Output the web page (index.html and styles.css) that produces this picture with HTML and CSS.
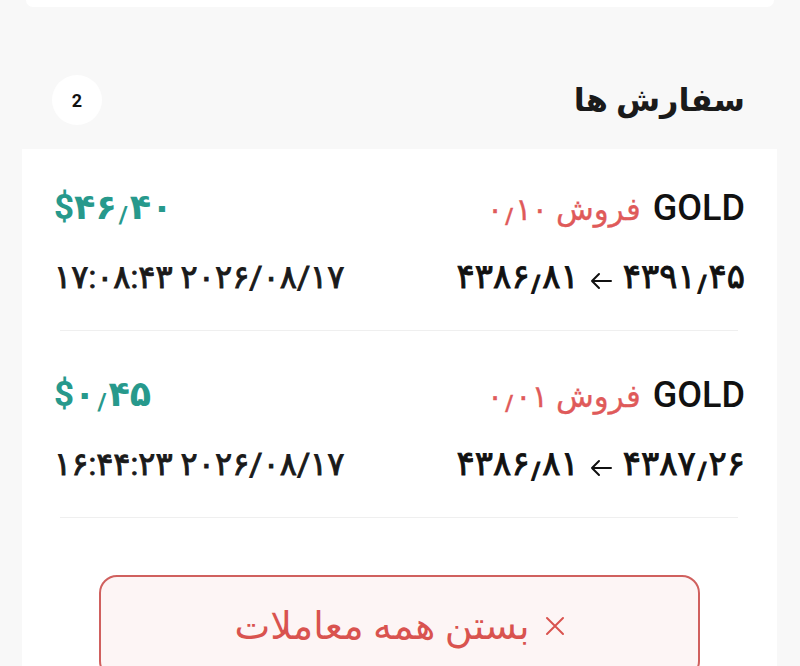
FILE: index.html
```html
<!DOCTYPE html>
<html lang="fa">
<head>
<meta charset="utf-8">
<title>سفارش ها</title>
<link rel="stylesheet" href="styles.css">
</head>
<body>
<div class="top-card"></div>
<header class="head" dir="rtl">
  <h2 class="title">سفارش ها</h2>
  <span class="badge">2</span>
</header>
<section class="list" dir="rtl">
  <div class="order">
    <div class="line line-main">
      <div class="sym"><span class="name">GOLD</span><span class="side">فروش <bdi>۰<span class="dec">/</span>۱۰</bdi></span></div>
      <div class="profit" dir="ltr">$۴۶<span class="dec">/</span>۴۰</div>
    </div>
    <div class="line line-sub">
      <div class="prices"><bdi>۴۳۹۱<span class="dec">/</span>۴۵</bdi><svg class="arrow" viewBox="0 0 24 18" width="24" height="18"><path d="M22 9H3M10 2L3 9l7 7" fill="none" stroke="#111" stroke-width="2" stroke-linecap="round" stroke-linejoin="round"/></svg><bdi>۴۳۸۶<span class="dec">/</span>۸۱</bdi></div>
      <div class="time" dir="ltr">۱۷:۰۸:۴۳ ۲۰۲۶/۰۸/۱۷</div>
    </div>
  </div>
  <div class="order">
    <div class="line line-main">
      <div class="sym"><span class="name">GOLD</span><span class="side">فروش <bdi>۰<span class="dec">/</span>۰۱</bdi></span></div>
      <div class="profit" dir="ltr">$۰<span class="dec">/</span>۴۵</div>
    </div>
    <div class="line line-sub">
      <div class="prices"><bdi>۴۳۸۷<span class="dec">/</span>۲۶</bdi><svg class="arrow" viewBox="0 0 24 18" width="24" height="18"><path d="M22 9H3M10 2L3 9l7 7" fill="none" stroke="#111" stroke-width="2" stroke-linecap="round" stroke-linejoin="round"/></svg><bdi>۴۳۸۶<span class="dec">/</span>۸۱</bdi></div>
      <div class="time" dir="ltr">۱۶:۴۴:۲۳ ۲۰۲۶/۰۸/۱۷</div>
    </div>
  </div>
  <button class="close-all" type="button"><svg class="x" viewBox="0 0 20 20" width="20" height="20"><path d="M2 2L18 18M18 2L2 18" fill="none" stroke="#d9534f" stroke-width="2" stroke-linecap="round"/></svg><span>بستن همه معاملات</span></button>
</section>
</body>
</html>
```

FILE: styles.css
```css
html, body {
  margin: 0;
  padding: 0;
}
body {
  background: #f8f8f8;
  font-family: Roboto, "DejaVu Sans", sans-serif;
  color: #111;
  height: 666px;
  overflow: hidden;
}
.top-card {
  height: 7px;
  margin: 0 26px;
  background: #fff;
  border-radius: 0 0 18px 18px;
}
.head {
  display: flex;
  align-items: center;
  justify-content: space-between;
  box-sizing: border-box;
  height: 142px;
  padding: 44px 55px 0 52px;
}
.title {
  margin: 0;
  font-size: 32px;
  font-weight: 700;
  line-height: 1;
  color: #1a1a1a;
}
.badge {
  width: 50px;
  height: 50px;
  border-radius: 50%;
  background: #fff;
  display: flex;
  align-items: center;
  justify-content: center;
  font-weight: 700;
  font-size: 18px;
  color: #111;
}
.list {
  background: #fff;
  margin: 0 23px 0 22px;
  padding: 0 32px;
  height: 560px;
}
.order {
  padding-top: 40px;
}
.order:first-child {
  padding-top: 35px;
}
.order::after {
  content: "";
  display: block;
  height: 1px;
  margin: 31px 7px 0 6px;
  background: #efefef;
}
.line {
  display: flex;
  align-items: center;
  justify-content: space-between;
}
.line-main {
  height: 48px;
}
.line-sub {
  height: 44px;
  margin-top: 23px;
}
.sym {
  display: flex;
  align-items: baseline;
  gap: 12px;
}
.name {
  font-size: 36px;
  font-weight: 500;
  color: #111;
}
.side {
  font-size: 31px;
  color: #df5a5a;
  -webkit-text-stroke: 0.3px #df5a5a;
}
.dec {
  display: inline-block;
  font-size: 0.7em;
  vertical-align: -0.2em;
  margin: 0 0.08em;
  font-weight: 700;
}
.profit {
  font-size: 35px;
  font-weight: 700;
  color: #27998c;
}
.prices {
  display: flex;
  align-items: center;
  gap: 10px;
  font-size: 34px;
  font-weight: 400;
  -webkit-text-stroke: 0.9px #111;
}
.arrow {
  margin-top: 8px;
}
.time {
  font-size: 32px;
  font-weight: 400;
  color: #1a1a1a;
  -webkit-text-stroke: 0.9px #1a1a1a;
}
.close-all {
  display: flex;
  align-items: center;
  justify-content: center;
  gap: 15px;
  box-sizing: border-box;
  width: calc(100% - 90px);
  height: 104px;
  margin: 57px 45px 0;
  border: 2px solid #d0605e;
  border-radius: 18px;
  background: #fdf5f5;
  color: #d9534f;
  font-family: Roboto, "DejaVu Sans", sans-serif;
  font-size: 38px;
  padding: 0 0 2px;
}
.x {
  flex: none;
}
```
